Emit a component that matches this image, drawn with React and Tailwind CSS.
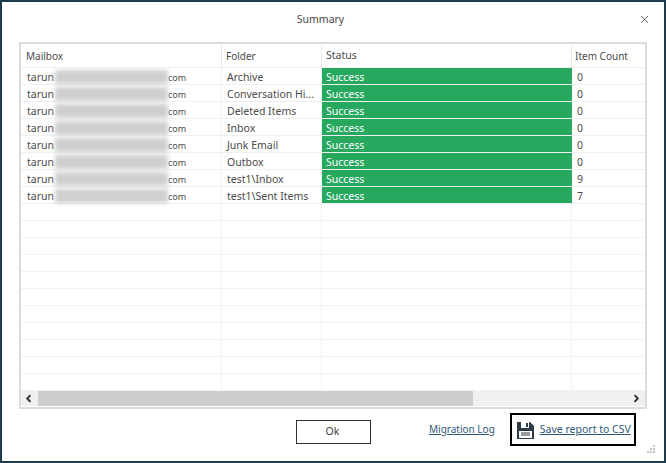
import { ChevronLeft, ChevronRight, X } from "lucide-react";

const rows = [
  { folder: "Archive", status: "Success", count: "0" },
  { folder: "Conversation Hi...", status: "Success", count: "0" },
  { folder: "Deleted Items", status: "Success", count: "0" },
  { folder: "Inbox", status: "Success", count: "0" },
  { folder: "Junk Email", status: "Success", count: "0" },
  { folder: "Outbox", status: "Success", count: "0" },
  { folder: "test1\\Inbox", status: "Success", count: "9" },
  { folder: "test1\\Sent Items", status: "Success", count: "7" },
];

const emptyRows = [...Array(11)];

const SaveIcon = () => (
  <svg width="17" height="17" viewBox="0 0 17 17" fill="#2d3a46">
    <path d="M0 0h13l4 4v13H0z" />
    <rect x="4" y="0" width="8" height="6" fill="#fff" />
    <rect x="9" y="1" width="2" height="4" fill="#2d3a46" />
    <rect x="2" y="9" width="13" height="7" fill="#fff" />
    <rect x="4" y="10.5" width="9" height="1" />
    <rect x="4" y="12.5" width="9" height="1" />
  </svg>
);

const App = () => {
  return (
    <div className="w-[666px] h-[463px] bg-white border-2 border-[#1d3a4f] flex flex-col text-[10.5px] text-[#4a4a4a] font-['Noto_Sans',sans-serif] overflow-hidden relative">
      {/* Title */}
      <div className="h-[40px] shrink-0 flex items-center justify-center relative pb-[5px] pr-[25px]">
        <span>Summary</span>
        <X size={13} strokeWidth={1.5} className="absolute right-[13px] top-[11px] text-[#444]" />
      </div>

      {/* Grid */}
      <div className="mx-[17px] h-[367px] shrink-0 border-2 border-[#dcdcdc] flex flex-col">
        <div className="flex h-[24px] shrink-0 border-b border-[#efefef] text-[10px] pt-[1px]">
          <div className="w-[201px] px-[5px] flex items-center border-r border-[#e6e6e6]">Mailbox</div>
          <div className="w-[100px] px-[4px] flex items-center border-r border-[#e6e6e6]">Folder</div>
          <div className="w-[250px] px-[4px] flex items-center border-r border-[#e6e6e6] text-[10.5px]">Status</div>
          <div className="flex-1 px-[3px] flex items-center">Item Count</div>
        </div>

        <div className="flex-1 min-h-0 overflow-hidden">
          {rows.map((row) => (
            <div key={row.folder} className="flex h-[17px] border-b border-[#efefef]">
              <div className="w-[201px] pl-[6px] pt-[3px] flex items-center border-r border-[#f2f2f2]">
                <span>tarun</span>
                <div className="w-[113px] h-[14px] ml-[1px] -mt-[2px] bg-[#cfcfcf] blur-[2px]" />
                <span className="text-[9px]">com</span>
              </div>
              <div className="w-[100px] px-[5px] pt-[3px] flex items-center border-r border-[#f2f2f2] whitespace-nowrap">{row.folder}</div>
              <div className="w-[250px] px-[4px] pt-[3px] flex items-center bg-[#27a85f] text-white">{row.status}</div>
              <div className="flex-1 px-[5px] pt-[3px] flex items-center">{row.count}</div>
            </div>
          ))}
          {emptyRows.map((_, i) => (
            <div key={i} className="flex h-[17px] border-b border-[#f2f2f2]">
              <div className="w-[201px] border-r border-[#f2f2f2]" />
              <div className="w-[100px] border-r border-[#f2f2f2]" />
              <div className="w-[250px] border-r border-[#f2f2f2]" />
            </div>
          ))}
        </div>

        {/* Scrollbar */}
        <div className="h-[15px] mb-[1px] shrink-0 bg-[#f0f0f0] flex items-center justify-between relative">
          <ChevronLeft size={11} strokeWidth={4} className="text-[#333] ml-[2px]" />
          <div className="absolute left-[17px] top-0 h-full w-[435px] bg-[#cdcdcd]" />
          <ChevronRight size={11} strokeWidth={4} className="text-[#333] mr-[3px]" />
        </div>
      </div>

      {/* Footer */}
      <div className="flex-1 flex items-start pt-[10px]">
        <button className="ml-[294px] w-[75px] h-[24px] mt-[1px] border border-[#333] text-[#444] text-[10.5px] flex items-center justify-center pr-[2px]">Ok</button>
        <a className="ml-[58px] mt-[3px] text-[10px] text-[#2f5878] underline whitespace-nowrap">Migration Log</a>
        <div className="ml-[15px] w-[126px] h-[33px] -mt-[6px] border-2 border-black flex items-center pl-[5px] gap-[6px] shrink-0 pt-[1px]">
          <SaveIcon />
          <a className="text-[#2f5878] underline whitespace-nowrap">Save report to CSV</a>
        </div>
      </div>

      {/* Resize grip */}
      <div className="absolute right-[9px] bottom-[8px] grid grid-cols-3 gap-[1px]">
        <span className="w-[2px] h-[2px]" /><span className="w-[2px] h-[2px]" /><span className="w-[2px] h-[2px] bg-[#c4c4c4]" />
        <span className="w-[2px] h-[2px]" /><span className="w-[2px] h-[2px] bg-[#c4c4c4]" /><span className="w-[2px] h-[2px] bg-[#c4c4c4]" />
        <span className="w-[2px] h-[2px] bg-[#c4c4c4]" /><span className="w-[2px] h-[2px] bg-[#c4c4c4]" /><span className="w-[2px] h-[2px] bg-[#c4c4c4]" />
      </div>
    </div>
  );
};

export default App;
